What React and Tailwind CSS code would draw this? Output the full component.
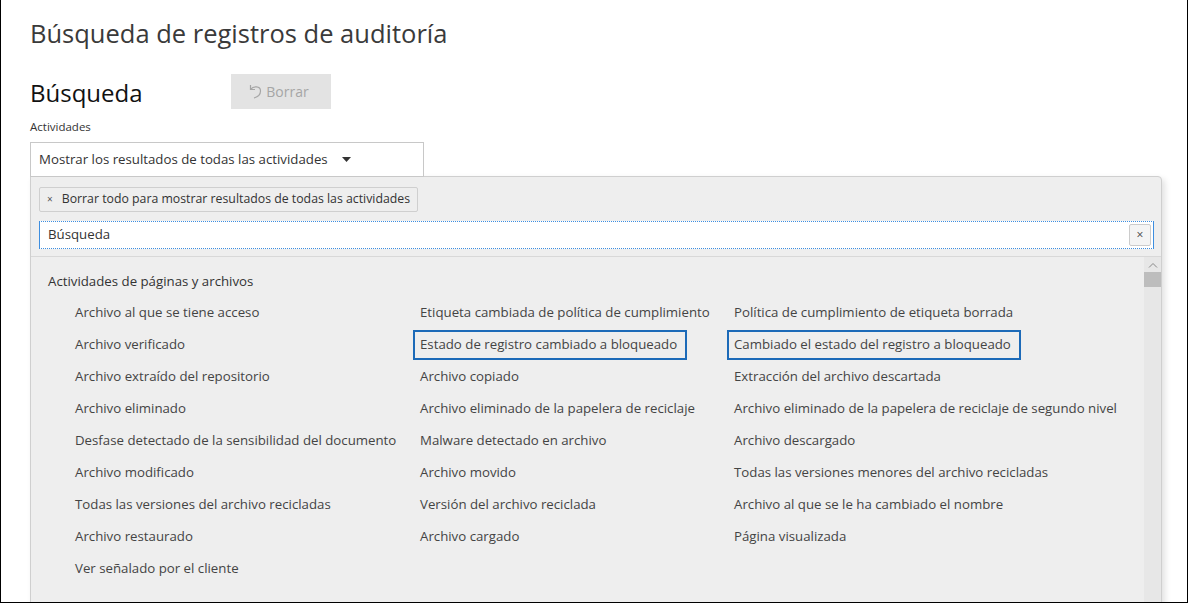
import React from "react";

const rows = [
  ["Archivo al que se tiene acceso", "Etiqueta cambiada de política de cumplimiento", "Política de cumplimiento de etiqueta borrada"],
  ["Archivo verificado", "Estado de registro cambiado a bloqueado", "Cambiado el estado del registro a bloqueado"],
  ["Archivo extraído del repositorio", "Archivo copiado", "Extracción del archivo descartada"],
  ["Archivo eliminado", "Archivo eliminado de la papelera de reciclaje", "Archivo eliminado de la papelera de reciclaje de segundo nivel"],
  ["Desfase detectado de la sensibilidad del documento", "Malware detectado en archivo", "Archivo descargado"],
  ["Archivo modificado", "Archivo movido", "Todas las versiones menores del archivo recicladas"],
  ["Todas las versiones del archivo recicladas", "Versión del archivo reciclada", "Archivo al que se le ha cambiado el nombre"],
  ["Archivo restaurado", "Archivo cargado", "Página visualizada"],
  ["Ver señalado por el cliente", "", ""],
];

const UndoIcon = () => (
  <svg width="13" height="15" viewBox="0 0 13 15" fill="none" stroke="#a6a6a6" strokeWidth="1.2">
    <path d="M1.5 1 V5.5 H6" />
    <path d="M1.8 5.2 C4 2 11.5 1.5 11.5 7 C11.5 10.5 8.5 13 5 14" />
  </svg>
);

const App = () => {
  return (
    <div
      className="w-[1189px] h-[604px] bg-white overflow-hidden"
      style={{ fontFamily: '"Open Sans", "Noto Sans", sans-serif' }}
    >
      <div className="w-[1188px] h-[603px] border-l border-r border-b border-black pl-[29px] overflow-hidden">
        <h1 className="text-[25.5px] leading-[32px] pt-[17px] text-[#3a3a3a] font-normal">
          Búsqueda de registros de auditoría
        </h1>

        <div className="flex items-start mt-[25px]">
          <h2 className="text-[24px] leading-[36px] text-[#111] font-normal w-[201px] pt-[1px]">Búsqueda</h2>
          <button className="w-[100px] h-[35px] bg-[#e3e3e3] flex items-center justify-center gap-[4px] pr-[4px] text-[14px] text-[#a6a6a6]">
            <UndoIcon />
            <span>Borrar</span>
          </button>
        </div>

        <div className="text-[11.5px] leading-[14px] text-[#333] mt-[9px]">Actividades</div>

        <div className="w-[394px] h-[35px] mt-[8px] border border-[#c8c8c8] bg-white flex items-center pl-[8px] text-[13.25px] text-[#333] relative z-10">
          <span>Mostrar los resultados de todas las actividades</span>
          <svg className="ml-[14px]" width="9" height="5" viewBox="0 0 9 5">
            <path d="M0 0 H9 L4.5 5 Z" fill="#333" />
          </svg>
        </div>

        <div className="w-[1132px] h-[440px] -mt-[1px] bg-[#eeeeee] border border-[#cfcfcf] rounded-tr-[4px] shadow-[3px_3px_6px_rgba(0,0,0,0.12)] flex flex-col">
          <div className="px-[8px] pt-[8px]">
            <div className="inline-flex items-center h-[25px] border border-[#cfcfcf] rounded-[2px] px-[7px] gap-[9px] text-[12.3px] text-[#333]">
              <span className="text-[10px] text-[#555]">×</span>
              <span>Borrar todo para mostrar resultados de todas las actividades</span>
            </div>
            <div className="mt-[9px] h-[28px] w-[1115px] bg-white border border-[#3d8ee0] [border-top-style:dotted] [border-bottom-style:dotted] flex items-center pl-[8px] pr-[2px] text-[13.25px] text-[#333]">
              <span className="flex-1">Búsqueda</span>
              <span className="w-[22px] h-[22px] border border-[#cccccc] rounded-[2px] bg-[#f4f4f4] flex items-center justify-center text-[12px] text-[#444]">
                ×
              </span>
            </div>
          </div>
          <div className="mt-[7px] border-t border-[#d8d8d8] flex flex-1">
            <div className="flex-1 pt-[13px]">
              <div className="pl-[17px] text-[13.25px] leading-[22px] text-[#333]">Actividades de páginas y archivos</div>
              <div className="mt-[6px] pl-[37px] grid grid-cols-[345px_314px_1fr] gap-y-[2px]">
                {rows.map((row, r) =>
                  row.map((item, c) => (
                    <div key={`${r}-${c}`} className="h-[30px] flex items-center">
                      {item && (
                        <span
                          className={`h-[30px] flex items-center pl-[5px] pr-[8px] border-2 text-[13.25px] text-[#444] ${
                            r === 1 && c > 0 ? "border-[#1c6ab8]" : "border-transparent"
                          }`}
                        >
                          {item}
                        </span>
                      )}
                    </div>
                  ))
                )}
              </div>
            </div>
            <div className="w-[17px] bg-[#e7e7e7] flex flex-col items-center">
              <svg className="mt-[5px]" width="10" height="6" viewBox="0 0 10 6" fill="none" stroke="#888" strokeWidth="1">
                <path d="M1 5.5 L5 1.5 L9 5.5" />
              </svg>
              <div className="mt-[4px] w-[17px] h-[15px] bg-[#bdbdbd]" />
              <div className="flex-1" />
              <svg className="mb-[4px]" width="10" height="6" viewBox="0 0 10 6" fill="none" stroke="#888" strokeWidth="1">
                <path d="M1 0.5 L5 4.5 L9 0.5" />
              </svg>
            </div>
          </div>
        </div>
      </div>
    </div>
  );
};

export default App;
